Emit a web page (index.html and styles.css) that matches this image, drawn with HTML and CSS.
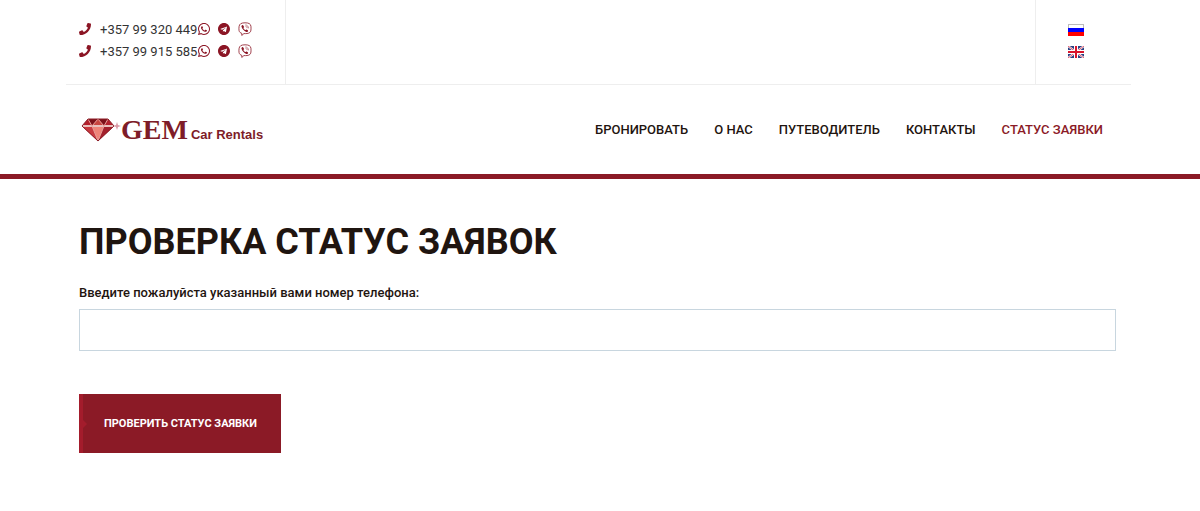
FILE: index.html
```html
<!DOCTYPE html>
<html lang="ru">
<head>
    <meta charset="UTF-8">
    <meta name="viewport" content="width=device-width, initial-scale=1.0">
    <title>GEM Car Rentals</title>
    <link rel="stylesheet" href="styles.css">
</head>
<body>

    <!-- Shared icons -->
    <svg class="sprite" aria-hidden="true">
        <symbol id="phone" viewBox="0 0 512 512">
            <path d="M493.4 24.6l-104-24c-11.3-2.6-22.9 3.3-27.5 13.9l-48 112c-4.2 9.8-1.4 21.3 6.9 28l60.6 49.6c-36 76.7-98.9 140.5-177.2 177.2l-49.6-60.6c-6.8-8.3-18.2-11.1-28-6.9l-112 48C3.9 366.5-2 378.1.6 389.4l24 104C27.1 504.2 36.7 512 48 512c256.1 0 464-207.5 464-464 0-11.2-7.7-20.9-18.6-23.4z"/>
        </symbol>
        <symbol id="whatsapp" viewBox="0 32 448 448">
            <path d="M380.9 97.1C339 55.1 283.2 32 223.9 32c-122.4 0-222 99.6-222 222 0 39.1 10.2 77.3 29.6 111L0 480l117.7-30.9c32.4 17.7 68.9 27 106.1 27h.1c122.3 0 224.1-99.6 224.1-222 0-59.3-25.2-115-67.1-157zm-157 341.6c-33.2 0-65.7-8.9-94-25.7l-6.7-4-69.8 18.3L72 359.2l-4.4-7c-18.5-29.4-28.2-63.3-28.2-98.2 0-101.7 82.8-184.5 184.6-184.5 49.3 0 95.6 19.2 130.4 54.1 34.8 34.9 56.2 81.2 56.1 130.5 0 101.8-84.9 184.6-186.6 184.6zm101.2-138.2c-5.5-2.8-32.8-16.2-37.9-18-5.1-1.9-8.8-2.8-12.5 2.8-3.7 5.6-14.3 18-17.6 21.8-3.2 3.7-6.5 4.2-12 1.4-32.6-16.3-54-29.1-75.5-66-5.7-9.8 5.7-9.1 16.3-30.3 1.8-3.7.9-6.9-.5-9.7-1.4-2.8-12.5-30.1-17.1-41.2-4.5-10.8-9.1-9.3-12.5-9.5-3.2-.2-6.9-.2-10.6-.2-3.7 0-9.7 1.4-14.8 6.9-5.1 5.6-19.4 19-19.4 46.3 0 27.3 19.9 53.7 22.6 57.4 2.8 3.7 39.1 59.7 94.8 83.8 35.2 15.2 49 16.5 66.6 13.9 10.7-1.6 32.8-13.4 37.4-26.4 4.6-13 4.6-24.1 3.2-26.4-1.3-2.5-5-3.9-10.5-6.6z"/>
        </symbol>
        <symbol id="telegram" viewBox="0 8 496 496">
            <path d="M248 8C111 8 0 119 0 256s111 248 248 248 248-111 248-248S385 8 248 8zm121.8 169.9l-40.7 191.8c-3 13.6-11.1 16.9-22.4 10.5l-62-45.7-29.9 28.8c-3.3 3.3-6.1 6.1-12.5 6.1l4.4-63.1 114.9-103.8c5-4.4-1.1-6.9-7.7-2.5l-142 89.4-61.2-19.1c-13.3-4.2-13.6-13.3 2.8-19.7l239.1-92.2c11.1-4 20.8 2.7 17.2 19.5z"/>
        </symbol>
        <symbol id="viber" viewBox="0 0 26 26">
            <path d="M13 1.500C6 1.500 2.500 3.500 2 8.500c-.4 3-.4 5 0 7.500.6 3 2.500 4.300 5 5V25l4-3.500c9 .5 12.500-1.500 13-6.500.3-2.500.3-4.500 0-7C23.500 3.300 20 1.500 13 1.500z" fill="none" stroke="currentColor" stroke-width="1.500"/>
            <path d="M8.500 5.500c-1.500.5-2.500 1.800-2 3.200 1.500 4.300 4.500 7.800 9 9.800 1.500.6 2.800-.5 3.300-2 .2-.8-2.300-2.500-3-2.700-.9-.2-1.200 1.200-2 1.100-1.600-.4-3.400-2.200-3.700-3.800 0-.8 1.300-1 1.200-1.900C11 8 9.500 5.400 8.500 5.500z"/>
            <path d="M13.500 5.500c3.500 0 6 2.500 6 6.300M14 8.200c2 .2 3 1.300 3 3.300" fill="none" stroke="currentColor" stroke-width="1"/>
        </symbol>
    </svg>

    <header class="header">
        <div class="container">
            <div class="topbar">
                <div class="phones">
                    <div class="phone-row">
                        <svg class="icon"><use href="#phone"/></svg>
                        <a class="number" href="tel:+35799320449">+357 99 320 449</a>
                        <a class="messenger" href="#" aria-label="WhatsApp"><svg class="icon"><use href="#whatsapp"/></svg></a>
                        <a class="messenger" href="#" aria-label="Telegram"><svg class="icon"><use href="#telegram"/></svg></a>
                        <a class="messenger" href="#" aria-label="Viber"><svg class="icon icon-viber"><use href="#viber"/></svg></a>
                    </div>
                    <div class="phone-row">
                        <svg class="icon"><use href="#phone"/></svg>
                        <a class="number" href="tel:+35799915585">+357 99 915 585</a>
                        <a class="messenger" href="#" aria-label="WhatsApp"><svg class="icon"><use href="#whatsapp"/></svg></a>
                        <a class="messenger" href="#" aria-label="Telegram"><svg class="icon"><use href="#telegram"/></svg></a>
                        <a class="messenger" href="#" aria-label="Viber"><svg class="icon icon-viber"><use href="#viber"/></svg></a>
                    </div>
                </div>
                <div class="languages">
                    <a href="#" aria-label="Русский">
                        <svg class="flag" viewBox="0 0 16 12">
                            <rect width="16" height="12" fill="#bbb"/>
                            <rect x="1" y="1" width="14" height="3" fill="#fff"/>
                            <rect y="4" width="16" height="4" fill="#00f"/>
                            <rect y="8" width="16" height="4" fill="#f00"/>
                        </svg>
                    </a>
                    <a href="#" aria-label="English">
                        <svg class="flag" viewBox="0 0 16 12">
                            <rect width="16" height="12" fill="#2b3f83"/>
                            <path d="M0 0l16 12M16 0L0 12" stroke="#fff" stroke-width="2"/>
                            <path d="M0 0l16 12M16 0L0 12" stroke="#e0566a" stroke-width="1"/>
                            <path d="M8 0v12M0 6h16" stroke="#fff" stroke-width="4"/>
                            <path d="M8 0v12M0 6h16" stroke="#d8142c" stroke-width="2"/>
                        </svg>
                    </a>
                </div>
            </div>

            <div class="navbar">
                <a class="logo" href="#">
                    <svg class="gem" viewBox="0 0 40 24">
                        <path d="M7 1h20l6 7-16 15L1 8z" fill="#b3202c"/>
                        <path d="M11 8h12l-6 15z" fill="#ef8378"/>
                        <path d="M1 8h10l6 15z" fill="#c93a40"/>
                        <path d="M23 8h10L17 23z" fill="#a3202c"/>
                        <path d="M7 1l4 7 6-7 6 7 4-7z" fill="#7c1019"/>
                        <path d="M11 8l6-7 6 7z" fill="#c9443f"/>
                        <path d="M1 8h32" fill="none" stroke="#e9c0bd" stroke-width="2"/>
                        <path d="M7 1l4 7 6-7 6 7 4-7M11 8l6 15 6-15" fill="none" stroke="#e9a09a" stroke-width="1"/>
                        <path d="M7 1h20l6 7-16 15L1 8z" fill="none" stroke="#8c1c26" stroke-width="1"/>
                        <path d="M36 4l1 3 3 1-3 1-1 3-1-3-3-1 3-1z" fill="#d99aa6"/>
                    </svg>
                    <span class="logo-name">GEM</span>
                    <span class="logo-text">Car Rentals</span>
                </a>
                <nav class="nav">
                    <a href="#">БРОНИРОВАТЬ</a>
                    <a href="#">О НАС</a>
                    <a href="#">ПУТЕВОДИТЕЛЬ</a>
                    <a href="#">КОНТАКТЫ</a>
                    <a class="active" href="#">СТАТУС ЗАЯВКИ</a>
                </nav>
            </div>
        </div>
    </header>

    <main class="container">
        <form class="status-form">
            <h1>ПРОВЕРКА СТАТУС ЗАЯВОК</h1>
            <label for="phoneInput">Введите пожалуйста указанный вами номер телефона:</label>
            <input type="text" id="phoneInput">
            <button type="button">ПРОВЕРИТЬ СТАТУС ЗАЯВКИ</button>
        </form>
    </main>

</body>
</html>
```
FILE: styles.css
```css
* {
    box-sizing: border-box;
}
body {
    margin: 0;
    font-family: Roboto, sans-serif;
    background-color: #fff;
    color: #1f1510;
}
a {
    color: inherit;
    text-decoration: none;
}
.sprite {
    display: none;
}
.container {
    padding: 0 69px 0 66px;
}
.header {
    border-bottom: 5px solid #8b1a26;
}
.topbar {
    display: flex;
    justify-content: space-between;
    border-bottom: 1px solid #eee;
}
.phones {
    width: 220px;
    padding: 18px 0 22px 13px;
    border-right: 1px solid #eee;
}
.phone-row {
    display: flex;
    align-items: center;
    height: 22px;
    font-size: 13px;
    color: #8b1524;
}
.number {
    margin: 0 1px 0 9px;
    color: #333;
}
.messenger {
    display: flex;
    margin-right: 8px;
}
.icon {
    display: block;
    width: 12px;
    height: 12px;
    fill: currentColor;
}
.icon-viber {
    width: 14px;
    height: 14px;
}
.languages {
    display: flex;
    flex-direction: column;
    gap: 10px;
    width: 96px;
    padding: 24px 32px;
    border-left: 1px solid #eee;
}
.flag {
    display: block;
    width: 16px;
    height: 12px;
}
.navbar {
    display: flex;
    align-items: center;
    justify-content: space-between;
    height: 89px;
    padding: 0 28px 0 15px;
}
.logo {
    display: flex;
    align-items: baseline;
    color: #7e1c28;
    font-weight: bold;
}
.gem {
    align-self: center;
    width: 40px;
    height: 24px;
}
.logo-name {
    font-family: "Liberation Serif", serif;
    font-size: 28px;
}
.logo-text {
    margin-left: 3px;
    font-family: "Liberation Sans", sans-serif;
    font-size: 13px;
}
.nav {
    display: flex;
    gap: 26px;
    font-size: 13px;
    font-weight: 500;
}
.nav .active {
    color: #8b1a26;
}
.status-form {
    display: flex;
    flex-direction: column;
    align-items: flex-start;
    padding: 41px 15px 58px 13px;
}
h1 {
    margin: 0 0 20px;
    font-size: 36px;
    line-height: 44px;
    font-weight: 700;
}
label {
    margin-bottom: 7px;
    font-size: 13px;
    line-height: 18px;
    font-weight: 500;
}
input[type="text"] {
    width: 100%;
    height: 42px;
    padding: 0 12px;
    border: 1px solid #c8d6df;
    font-size: 14px;
}
button {
    position: relative;
    margin-top: 43px;
    padding: 22px 24px 22px 21px;
    border: none;
    border-left: 4px solid #a31c2c;
    background-color: #8b1a26;
    color: #fff;
    font-family: inherit;
    font-size: 11px;
    font-weight: 700;
    line-height: 15px;
    cursor: pointer;
}
/* small arrow on the button edge */
button::before {
    content: "";
    position: absolute;
    left: 0;
    top: 50%;
    margin-top: -4px;
    border: 4px solid transparent;
    border-left-color: #a31c2c;
}
button:hover {
    background-color: #a31c2c;
}
```
